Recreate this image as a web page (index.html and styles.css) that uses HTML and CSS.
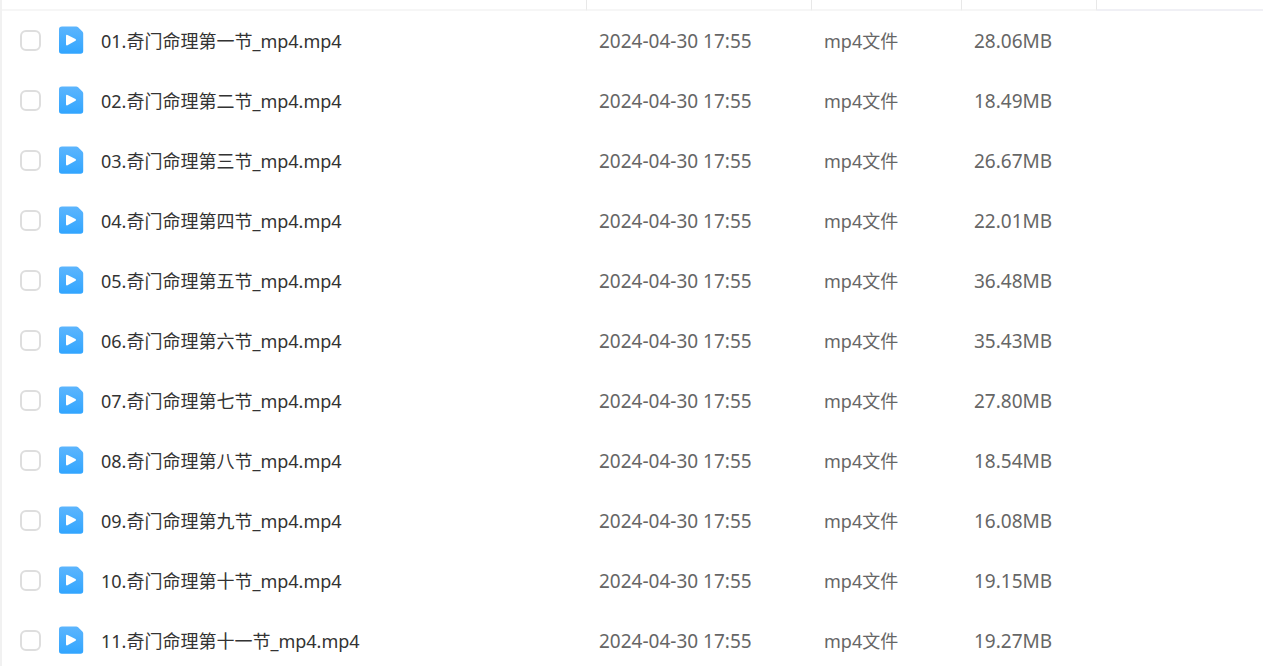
FILE: index.html
```html
<!DOCTYPE html>
<html lang="zh-CN">
<head>
  <meta charset="UTF-8" />
  <meta name="viewport" content="width=device-width, initial-scale=1.0"/>
  <title>文件列表</title>
  <link rel="stylesheet" href="styles.css">
</head>
<body>

  <svg class="icon-defs" aria-hidden="true">
    <defs>
      <linearGradient id="fileBlue" x1="0" y1="0" x2="0" y2="1">
        <stop offset="0" stop-color="#5cb5fd"/>
        <stop offset="1" stop-color="#31a5ff"/>
      </linearGradient>
      <symbol id="video" viewBox="0 0 25 28">
        <path fill="url(#fileBlue)" d="M3 0.4H17.2Q18.3 0.4 19.1 1.2L23.4 5.4Q24.2 6.2 24.2 7.3V25Q24.2 27.7 21.5 27.7H2.8Q0 27.7 0 25V3.2Q0 0.4 3 0.4Z"/>
        <path fill="#fff" d="M7 9.9Q7 8.2 8.5 9L16.5 13.1Q17.8 14 16.5 14.8L8.5 19.2Q7 20 7 18.3Z"/>
      </symbol>
    </defs>
  </svg>

  <div class="file-list">
    <table class="file-table">
      <colgroup>
        <col class="col-name">
        <col class="col-date">
        <col class="col-type">
        <col class="col-size">
        <col class="col-rest">
      </colgroup>
      <thead>
        <tr><th></th><th></th><th></th><th></th><th></th></tr>
      </thead>
      <tbody>
        <tr>
          <td><div class="file-name"><input type="checkbox" id="file1"><svg class="file-icon"><use href="#video"/></svg><label for="file1">01.奇门命理第一节_mp4.mp4</label></div></td>
          <td class="date">2024-04-30 17:55</td>
          <td class="type">mp4文件</td>
          <td class="size">28.06MB</td>
          <td></td>
        </tr>
        <tr>
          <td><div class="file-name"><input type="checkbox" id="file2"><svg class="file-icon"><use href="#video"/></svg><label for="file2">02.奇门命理第二节_mp4.mp4</label></div></td>
          <td class="date">2024-04-30 17:55</td>
          <td class="type">mp4文件</td>
          <td class="size">18.49MB</td>
          <td></td>
        </tr>
        <tr>
          <td><div class="file-name"><input type="checkbox" id="file3"><svg class="file-icon"><use href="#video"/></svg><label for="file3">03.奇门命理第三节_mp4.mp4</label></div></td>
          <td class="date">2024-04-30 17:55</td>
          <td class="type">mp4文件</td>
          <td class="size">26.67MB</td>
          <td></td>
        </tr>
        <tr>
          <td><div class="file-name"><input type="checkbox" id="file4"><svg class="file-icon"><use href="#video"/></svg><label for="file4">04.奇门命理第四节_mp4.mp4</label></div></td>
          <td class="date">2024-04-30 17:55</td>
          <td class="type">mp4文件</td>
          <td class="size">22.01MB</td>
          <td></td>
        </tr>
        <tr>
          <td><div class="file-name"><input type="checkbox" id="file5"><svg class="file-icon"><use href="#video"/></svg><label for="file5">05.奇门命理第五节_mp4.mp4</label></div></td>
          <td class="date">2024-04-30 17:55</td>
          <td class="type">mp4文件</td>
          <td class="size">36.48MB</td>
          <td></td>
        </tr>
        <tr>
          <td><div class="file-name"><input type="checkbox" id="file6"><svg class="file-icon"><use href="#video"/></svg><label for="file6">06.奇门命理第六节_mp4.mp4</label></div></td>
          <td class="date">2024-04-30 17:55</td>
          <td class="type">mp4文件</td>
          <td class="size">35.43MB</td>
          <td></td>
        </tr>
        <tr>
          <td><div class="file-name"><input type="checkbox" id="file7"><svg class="file-icon"><use href="#video"/></svg><label for="file7">07.奇门命理第七节_mp4.mp4</label></div></td>
          <td class="date">2024-04-30 17:55</td>
          <td class="type">mp4文件</td>
          <td class="size">27.80MB</td>
          <td></td>
        </tr>
        <tr>
          <td><div class="file-name"><input type="checkbox" id="file8"><svg class="file-icon"><use href="#video"/></svg><label for="file8">08.奇门命理第八节_mp4.mp4</label></div></td>
          <td class="date">2024-04-30 17:55</td>
          <td class="type">mp4文件</td>
          <td class="size">18.54MB</td>
          <td></td>
        </tr>
        <tr>
          <td><div class="file-name"><input type="checkbox" id="file9"><svg class="file-icon"><use href="#video"/></svg><label for="file9">09.奇门命理第九节_mp4.mp4</label></div></td>
          <td class="date">2024-04-30 17:55</td>
          <td class="type">mp4文件</td>
          <td class="size">16.08MB</td>
          <td></td>
        </tr>
        <tr>
          <td><div class="file-name"><input type="checkbox" id="file10"><svg class="file-icon"><use href="#video"/></svg><label for="file10">10.奇门命理第十节_mp4.mp4</label></div></td>
          <td class="date">2024-04-30 17:55</td>
          <td class="type">mp4文件</td>
          <td class="size">19.15MB</td>
          <td></td>
        </tr>
        <tr>
          <td><div class="file-name"><input type="checkbox" id="file11"><svg class="file-icon"><use href="#video"/></svg><label for="file11">11.奇门命理第十一节_mp4.mp4</label></div></td>
          <td class="date">2024-04-30 17:55</td>
          <td class="type">mp4文件</td>
          <td class="size">19.27MB</td>
          <td></td>
        </tr>
      </tbody>
    </table>
  </div>

</body>
</html>
```
FILE: styles.css
```css
* {
  margin: 0;
  padding: 0;
  box-sizing: border-box;
}

body {
  background: #fff;
  color: #666;
  font-family: "Noto Sans", "Noto Sans CJK SC", sans-serif;
  font-size: 18px;
  line-height: 24px;
}

.icon-defs {
  position: absolute;
  width: 0;
  height: 0;
}

.file-list {
  height: 100vh;
  overflow: hidden;
  border-left: 2px solid #f1f1f1;
}

.file-table {
  width: 100%;
  table-layout: fixed;
  border-collapse: separate;
  border-spacing: 0;
}

.col-name {
  width: 585px;
}

.col-date {
  width: 225px;
}

.col-type {
  width: 150px;
}

.col-size {
  width: 135px;
}

.file-table th {
  height: 11px;
  border-right: 1px solid #e8e8e8;
  border-bottom: 2px solid #f6f6f6;
}

.file-table th:last-child {
  border-right: none;
  border-bottom-color: #f0f0f5;
}

.file-table td {
  height: 60px;
  padding-left: 12px;
  text-align: left;
  vertical-align: middle;
  white-space: nowrap;
}

.file-table td:first-child {
  padding-left: 18px;
  padding-bottom: 2px;
}

.file-table .date,
.file-table .size {
  font-size: 19px;
}

.file-name {
  display: flex;
  align-items: center;
  color: #333;
}

.file-name input {
  appearance: none;
  width: 21px;
  height: 21px;
  margin-right: 18px;
  border: 2px solid #dedede;
  border-radius: 6px;
  background: #fff;
  cursor: pointer;
}

.file-name input:checked {
  border-color: #31a5ff;
  background: #31a5ff;
}

.file-icon {
  width: 25px;
  height: 28px;
  margin-right: 17px;
}

.file-name label {
  padding-top: 2px;
  cursor: pointer;
}
```
